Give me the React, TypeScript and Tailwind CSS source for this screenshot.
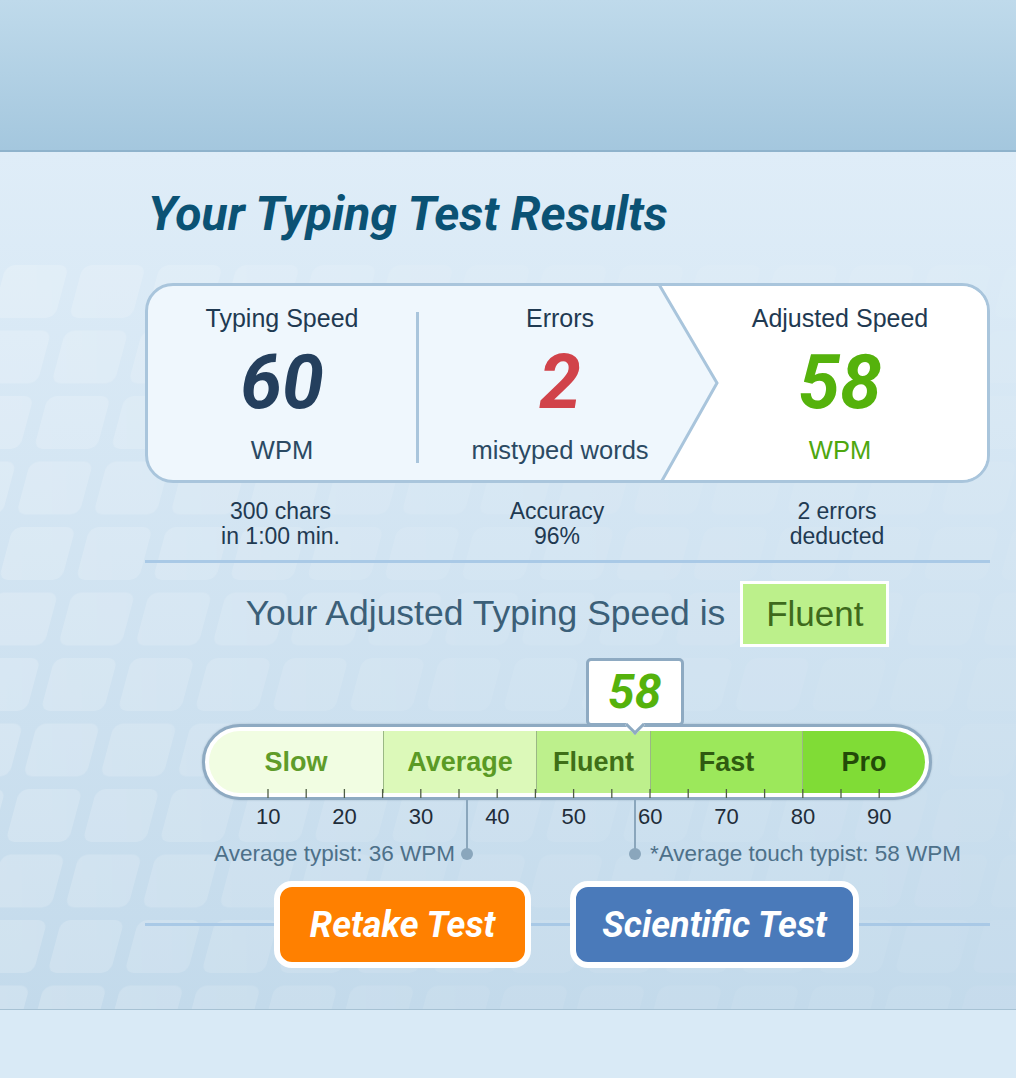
import React from "react";

const SANS = { fontFamily: '"Liberation Sans", Arial, sans-serif' };
const HEAD = { fontFamily: "Roboto, \"Open Sans\", sans-serif" };

const x = (wpm: number) => 268 + (wpm - 10) * 7.64 - 145;
const ticks = Array.from({ length: 17 }, (_, i) => 10 + i * 5);
const labels = [10, 20, 30, 40, 50, 60, 70, 80, 90];

const segments = [
  { name: "Slow", w: 174, bg: "bg-[#f1fde2]", fg: "text-[#5f9c2a]" },
  { name: "Average", w: 153, bg: "bg-[#dcf9b9]", fg: "text-[#5a9a25]" },
  { name: "Fluent", w: 114, bg: "bg-[#bdf08c]", fg: "text-[#3f6f17]" },
  { name: "Fast", w: 152, bg: "bg-[#9ce85b]", fg: "text-[#2f5a10]" },
  { name: "Pro", w: 123, bg: "bg-[#80dc36]", fg: "text-[#234a08]" },
];

function KeyPattern() {
  return (
    <svg className="pointer-events-none absolute inset-0 h-full w-full" aria-hidden>
      <defs>
        <pattern
          id="keys"
          width="77"
          height="65.5"
          patternUnits="userSpaceOnUse"
          patternTransform="translate(0 113) skewX(-15)"
        >
          <rect x="6" y="0" width="63" height="53" rx="9" fill="#ffffff" fillOpacity="0.2" />
        </pattern>
        <linearGradient id="fade" x1="0" x2="1" y1="0" y2="0">
          <stop offset="0" stopColor="#fff" stopOpacity="1" />
          <stop offset="0.45" stopColor="#fff" stopOpacity="0.4" />
          <stop offset="1" stopColor="#fff" stopOpacity="0.25" />
        </linearGradient>
        <mask id="keymask">
          <rect x="0" y="113" width="100%" height="100%" fill="url(#fade)" />
        </mask>
      </defs>
      <rect width="100%" height="100%" fill="url(#keys)" mask="url(#keymask)" />
    </svg>
  );
}

function Stat({ label, value, unit, valueColor, unitColor, className }: {
  label: string; value: string; unit: string; valueColor: string; unitColor: string; className: string;
}) {
  return (
    <div className={`flex flex-col items-center pt-[18px] ${className}`}>
      <div className="text-[25px] leading-[28px] text-[#1f3a52]" style={SANS}>{label}</div>
      <div className={`mt-[13px] text-[75px] leading-[75px] font-bold italic ${valueColor}`} style={HEAD}>
        {value}
      </div>
      <div className={`mt-[16px] text-[25.5px] leading-[28px] ${unitColor}`} style={SANS}>{unit}</div>
    </div>
  );
}

export default function App() {
  return (
    <div className="min-h-[1078px] w-[1016px] bg-[#d9eaf6]">
      <div className="h-[152px] border-b-[2px] border-[#8fb3cc] bg-gradient-to-b from-[#bfdaeb] to-[#a4c7de]" />

      <div className="relative h-[858px] overflow-hidden border-b border-[#a7c2d4] bg-gradient-to-b from-[#dfedf8] to-[#c3daeb]">
        <KeyPattern />

        <div className="relative ml-[145px] flex w-[845px] flex-col">
          <h1
            className="mt-[34px] ml-[3px] whitespace-nowrap text-[48px] leading-[56px] font-bold italic text-[#0b5274]"
            style={HEAD}
          >
            Your Typing Test Results
          </h1>

          {/* result card */}
          <div className="relative mt-[41px] h-[200px] overflow-hidden rounded-[28px] border-[3px] border-[#a9c5dc] bg-[#eff7fd]">
            <svg className="absolute inset-0 h-full w-full" aria-hidden>
              <polygon points="509,-5 569,97 511,200 860,200 860,-5" fill="#ffffff" />
              <polyline points="509,-5 569,97 511,200" fill="none" stroke="#a9c5dc" strokeWidth="3" />
            </svg>
            <div className="relative flex h-full">
              <Stat label="Typing Speed" value="60" unit="WPM" valueColor="text-[#243f5d]" unitColor="text-[#2b4a63]" className="w-[268px]" />
              <div className="mt-[26px] mb-[17px] w-[3px] bg-[#a9c5dc]" />
              <Stat label="Errors" value="2" unit="mistyped words" valueColor="text-[#d1434a]" unitColor="text-[#2b4a63]" className="w-[282px]" />
              <Stat label="Adjusted Speed" value="58" unit="WPM" valueColor="text-[#55b20c]" unitColor="text-[#4ea70f]" className="w-[286px] pr-[8px]" />
            </div>
          </div>

          <div className="mt-[16px] flex text-center text-[23px] leading-[25px] text-[#1f3a52]" style={SANS}>
            <div className="w-[271px]">300 chars<br />in 1:00 min.</div>
            <div className="w-[282px]">Accuracy<br />96%</div>
            <div className="w-[286px] pr-[8px]">2 errors<br />deducted</div>
          </div>

          <div className="mt-[11px] h-[3px] bg-[#a9c9e6]" />

          <div className="mt-[18px] flex items-center justify-center gap-[15px]" style={SANS}>
            <span className="text-[35.5px] text-[#3b5f78]">Your Adjusted Typing Speed is</span>
            <span className="h-[66px] w-[149px] border-[3px] border-white bg-[#bcf08b] text-center text-[35px] leading-[60px] text-[#3e6a1c]">
              Fluent
            </span>
          </div>

          {/* speed scale */}
          <div className="relative mt-[11px] flex flex-col">
            <div
              className="absolute top-0 z-10 flex h-[68px] w-[98px] items-center justify-center rounded-[5px] border-[3px] border-[#8eaac2] bg-white"
              style={{ left: x(58) - 49 }}
            >
              <span className="text-[48px] leading-none font-bold italic text-[#55b20c]" style={HEAD}>58</span>
              <span className="absolute -bottom-[9px] left-1/2 h-[14px] w-[14px] -translate-x-1/2 rotate-45 border-r-[3px] border-b-[3px] border-[#8eaac2] bg-white" />
            </div>

            <div className="mt-[66px] ml-[57px] w-[730px] rounded-full border-[3px] border-[#8eaac2] bg-white p-[4px] shadow-[0_0_2px_rgba(80,110,140,0.4)]">
              <div className="flex h-[62px] overflow-hidden rounded-full" style={SANS}>
                {segments.map((s, i) => (
                  <div
                    key={s.name}
                    className={`flex items-center justify-center text-[27px] font-bold ${s.bg} ${s.fg} ${i > 0 ? "border-l border-[#9ab884]" : ""}`}
                    style={{ width: s.w }}
                  >
                    {s.name}
                  </div>
                ))}
              </div>
            </div>

            <svg className="absolute left-0 top-[131px] h-[10px] w-[845px]" aria-hidden>
              {ticks.map((t) => (
                <line key={t} x1={x(t)} x2={x(t)} y1="0" y2="9" stroke="#4f5d46" strokeWidth="1.3" />
              ))}
            </svg>

            {[36, 58].map((w) => (
              <div key={w} className="absolute top-[142px] h-[54px] w-[2px] bg-[#8aa6bc]" style={{ left: x(w) - 1 }}>
                <span className="absolute -bottom-[6px] -left-[5px] h-[12px] w-[12px] rounded-full bg-[#8aa6bc]" />
              </div>
            ))}

            <div className="mt-[5px] ml-[85px] flex text-[22px] leading-[24px] text-[#1f2d3a]" style={SANS}>
              {labels.map((l) => (
                <span key={l} className="w-[76.4px] text-center">{l}</span>
              ))}
            </div>

            <div className="mt-[13px] flex text-[22.5px] leading-[24px] text-[#4d7089]" style={SANS}>
              <span className="w-[310px] whitespace-nowrap text-right">Average typist: 36 WPM</span>
              <span className="ml-[195px] whitespace-nowrap">*Average touch typist: 58 WPM</span>
            </div>
          </div>

          {/* actions */}
          <div className="mt-[15px] flex items-center">
            <div className="h-[3px] flex-1 bg-[#a9c9e6]" />
            <button
              className="h-[87px] w-[257px] rounded-[18px] border-[6px] border-white bg-[#ff8000] text-[36px] font-bold italic text-white"
              style={HEAD}
            >
              Retake Test
            </button>
            <div className="h-[3px] w-[39px] bg-[#a9c9e6]" />
            <button
              className="h-[87px] w-[289px] rounded-[18px] border-[6px] border-white bg-[#4a7aba] text-[36px] font-bold italic text-white"
              style={HEAD}
            >
              Scientific Test
            </button>
            <div className="h-[3px] w-[131px] bg-[#a9c9e6]" />
          </div>
        </div>
      </div>

      <div className="h-[68px] bg-[#d9eaf6]" />
    </div>
  );
}
